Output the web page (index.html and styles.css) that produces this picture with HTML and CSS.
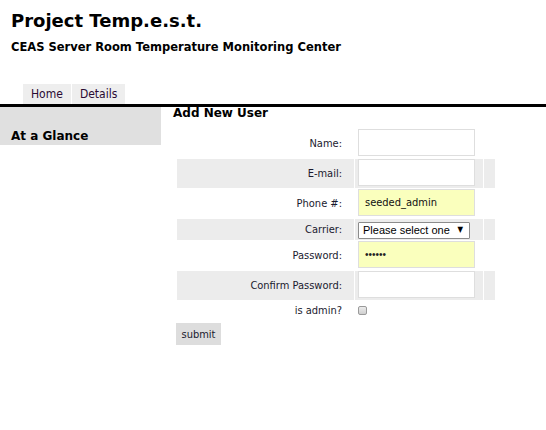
FILE: index.html
```html
<!DOCTYPE html>
<html>
<head>
<meta charset="utf-8">
<title>Project Temp.e.s.t.</title>
<link rel="stylesheet" href="styles.css">
</head>
<body>
<header class="masthead">
  <h1 class="title">Project Temp.e.s.t.</h1>
  <p class="subtitle">CEAS Server Room Temperature Monitoring Center</p>
</header>
<nav class="tabs">
  <a class="tab" href="#">Home</a>
  <a class="tab" href="#">Details</a>
</nav>
<div class="main">
  <aside class="sidebar">
    <h3 class="side-title">At a Glance</h3>
  </aside>
  <section class="content">
    <h2 class="form-title">Add New User</h2>
    <form class="user-form">
      <table class="form-table">
        <tr class="row">
          <td class="label">Name:</td>
          <td class="field"><input class="text-input" type="text"></td>
          <td class="extra"></td>
        </tr>
        <tr class="row alt">
          <td class="label">E-mail:</td>
          <td class="field"><input class="text-input" type="text"></td>
          <td class="extra"></td>
        </tr>
        <tr class="row">
          <td class="label">Phone #:</td>
          <td class="field"><input class="text-input filled" type="text" value="seeded_admin"></td>
          <td class="extra"></td>
        </tr>
        <tr class="row alt short">
          <td class="label">Carrier:</td>
          <td class="field sel-cell">
            <div class="select-wrap">
              <select class="select"><option>Please select one</option></select>
              <span class="arrow">&#9660;</span>
            </div>
          </td>
          <td class="extra"></td>
        </tr>
        <tr class="row">
          <td class="label">Password:</td>
          <td class="field"><input class="text-input filled pw" type="password" value="abcdef"></td>
          <td class="extra"></td>
        </tr>
        <tr class="row alt">
          <td class="label">Confirm Password:</td>
          <td class="field"><input class="text-input pw" type="password"></td>
          <td class="extra"></td>
        </tr>
        <tr class="row check-row">
          <td class="label">is admin?</td>
          <td class="field chk-cell"><input class="check" type="checkbox"></td>
          <td class="extra"></td>
        </tr>
      </table>
      <button class="submit" type="button">submit</button>
    </form>
  </section>
</div>
</body>
</html>
```
FILE: styles.css
```css
html, body {
  margin: 0;
  padding: 0;
  background: #fff;
}
body {
  font-family: "DejaVu Sans Condensed", "DejaVu Sans", sans-serif;
  font-stretch: condensed;
  color: #1a1a2e;
}
.masthead {
  padding: 10px 0 0 11px;
}
.title {
  margin: 0;
  font-family: "DejaVu Sans", sans-serif;
  font-stretch: normal;
  font-weight: bold;
  font-size: 18px;
  line-height: 21px;
  color: #000;
}
.subtitle {
  margin: 9px 0 0 0;
  font-family: "DejaVu Sans", sans-serif;
  font-stretch: normal;
  font-weight: bold;
  font-size: 11.5px;
  line-height: 14px;
  color: #000;
}
.tabs {
  display: flex;
  gap: 1px;
  margin-top: 30px;
  padding-left: 23px;
  border-bottom: 3px solid #000;
}
.tab {
  display: block;
  background: #eee;
  padding: 0 8px;
  height: 20px;
  line-height: 20px;
  font-size: 12px;
  color: #2a0a33;
  text-decoration: none;
}
.main {
  display: flex;
  align-items: flex-start;
}
.sidebar {
  width: 161px;
  flex: none;
  background: #e0e0e0;
  box-sizing: border-box;
  padding: 22px 11px 1px;
}
.side-title {
  margin: 0;
  font-family: "DejaVu Sans", sans-serif;
  font-stretch: normal;
  font-weight: bold;
  font-size: 12px;
  line-height: 15px;
  color: #000;
}
.content {
  padding-left: 12px;
}
.form-title {
  margin: 0 0 9px 0;
  font-family: "DejaVu Sans", sans-serif;
  font-stretch: normal;
  font-weight: bold;
  font-size: 12px;
  line-height: 12px;
  color: #000;
}
.user-form {
  margin: 0 0 0 3px;
}
.form-table {
  border-collapse: separate;
  border-spacing: 1px;
}
.row td {
  padding: 0;
  height: 29px;
}
.row.short td {
  height: 18px;
}
.row.check-row td {
  height: 18px;
}
.row.alt td {
  background: #ececec;
}
.label {
  width: 165px;
  padding-right: 12px !important;
  text-align: right;
  vertical-align: middle;
  font-size: 11px;
}
.field {
  width: 125px;
  padding-left: 3px !important;
  vertical-align: top;
}
.extra {
  width: 11px;
}
.text-input {
  display: block;
  box-sizing: border-box;
  width: 117px;
  height: 27px;
  margin: 0;
  border: 1px solid #dedede;
  background: #fff;
  padding: 0 6px;
  font-family: "DejaVu Sans Condensed", "DejaVu Sans", sans-serif;
  font-stretch: condensed;
  font-size: 11px;
  color: #111;
  outline: none;
}
.text-input.pw {
  font-family: "Liberation Sans", Arial, sans-serif;
  font-stretch: normal;
  font-size: 10px;
  letter-spacing: 0;
  color: #222;
}
.text-input.filled {
  background: #faffbd;
}
.sel-cell {
  vertical-align: top;
  padding-top: 3px !important;
}
.select-wrap {
  position: relative;
  width: 112px;
  height: 17px;
}
.select {
  -webkit-appearance: none;
  appearance: none;
  display: block;
  box-sizing: border-box;
  width: 112px;
  height: 17px;
  margin: 0;
  border: 1px solid #8c8c8c;
  border-radius: 1px;
  background: #fff;
  padding: 0 0 0 4px;
  font-family: "Liberation Sans", Arial, sans-serif;
  font-size: 11px;
  line-height: 15px;
  color: #000;
  outline: none;
}
.arrow {
  position: absolute;
  right: 7px;
  top: 2px;
  font-size: 8px;
  line-height: 12px;
  color: #000;
  font-family: "DejaVu Sans", sans-serif;
  pointer-events: none;
}
.chk-cell {
  vertical-align: middle;
}
.check {
  -webkit-appearance: none;
  appearance: none;
  display: block;
  box-sizing: border-box;
  width: 9px;
  height: 9px;
  margin: 1px 0 0 0;
  border: 1px solid #9a9a9a;
  border-radius: 2px;
  background: linear-gradient(#ececec, #cfcfcf);
}
.submit {
  display: block;
  margin: 3px 0 0 0;
  width: 45px;
  height: 22px;
  border: none;
  background: #ddd;
  padding: 0;
  font-family: "DejaVu Sans Condensed", "DejaVu Sans", sans-serif;
  font-stretch: condensed;
  font-size: 11px;
  color: #1a1a2e;
}
```
